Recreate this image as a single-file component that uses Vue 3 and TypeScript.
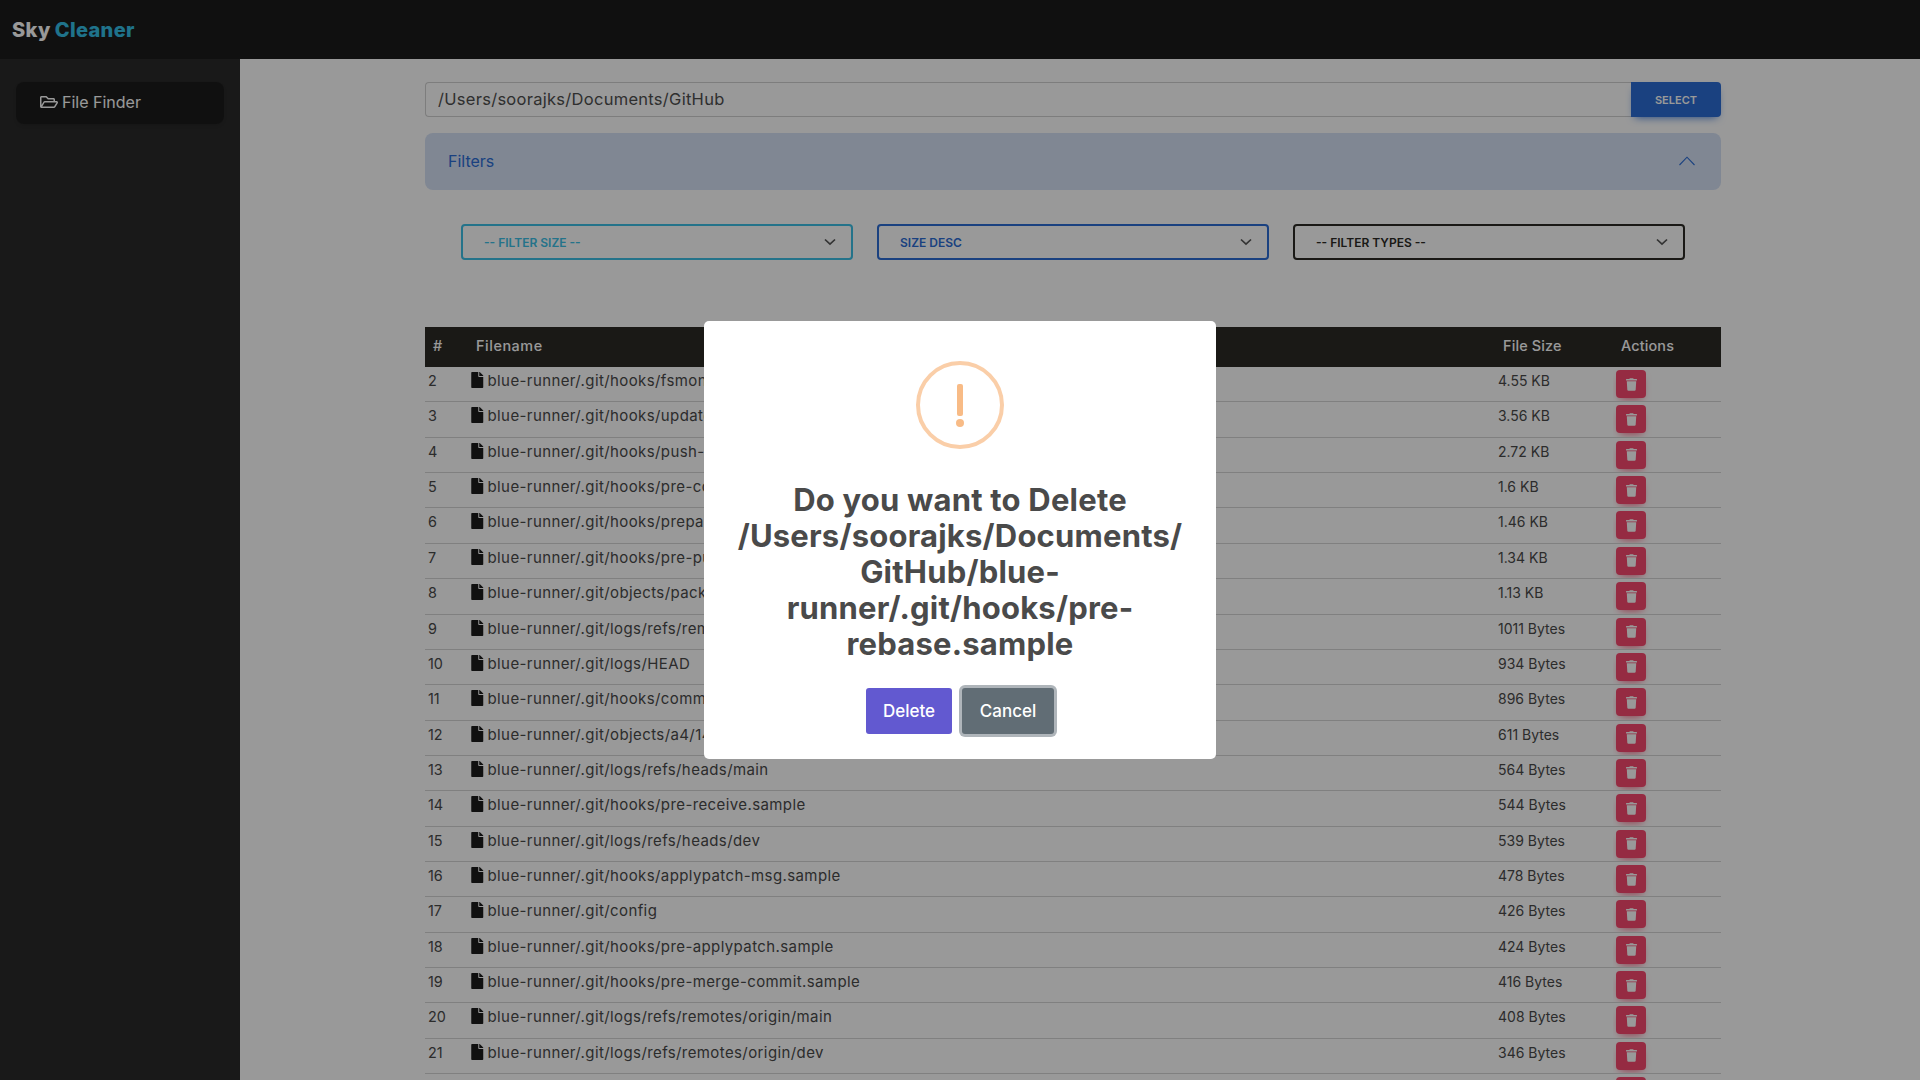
<script setup lang="ts">
interface Row { n: number; name: string; size: string }
const rows: Row[] = [
  { n: 2, name: 'blue-runner/.git/hooks/fsmonitor-watchman.sample', size: '4.55 KB' },
  { n: 3, name: 'blue-runner/.git/hooks/update.sample', size: '3.56 KB' },
  { n: 4, name: 'blue-runner/.git/hooks/push-to-checkout.sample', size: '2.72 KB' },
  { n: 5, name: 'blue-runner/.git/hooks/pre-commit.sample', size: '1.6 KB' },
  { n: 6, name: 'blue-runner/.git/hooks/prepare-commit-msg.sample', size: '1.46 KB' },
  { n: 7, name: 'blue-runner/.git/hooks/pre-push.sample', size: '1.34 KB' },
  { n: 8, name: 'blue-runner/.git/objects/pack/pack-a41c.idx', size: '1.13 KB' },
  { n: 9, name: 'blue-runner/.git/logs/refs/remotes/origin/HEAD', size: '1011 Bytes' },
  { n: 10, name: 'blue-runner/.git/logs/HEAD', size: '934 Bytes' },
  { n: 11, name: 'blue-runner/.git/hooks/commit-msg.sample', size: '896 Bytes' },
  { n: 12, name: 'blue-runner/.git/objects/a4/14c7e1', size: '611 Bytes' },
  { n: 13, name: 'blue-runner/.git/logs/refs/heads/main', size: '564 Bytes' },
  { n: 14, name: 'blue-runner/.git/hooks/pre-receive.sample', size: '544 Bytes' },
  { n: 15, name: 'blue-runner/.git/logs/refs/heads/dev', size: '539 Bytes' },
  { n: 16, name: 'blue-runner/.git/hooks/applypatch-msg.sample', size: '478 Bytes' },
  { n: 17, name: 'blue-runner/.git/config', size: '426 Bytes' },
  { n: 18, name: 'blue-runner/.git/hooks/pre-applypatch.sample', size: '424 Bytes' },
  { n: 19, name: 'blue-runner/.git/hooks/pre-merge-commit.sample', size: '416 Bytes' },
  { n: 20, name: 'blue-runner/.git/logs/refs/remotes/origin/main', size: '408 Bytes' },
  { n: 21, name: 'blue-runner/.git/logs/refs/remotes/origin/dev', size: '346 Bytes' },
]
const filters = [
  { label: '-- FILTER SIZE --', tone: 'teal' },
  { label: 'SIZE DESC', tone: 'blue' },
  { label: '-- FILTER TYPES --', tone: 'dark' },
]
</script>

<template>
  <div class="app">
    <header class="topbar">
      <span class="logo"><span class="sky">Sky</span><span class="cleaner">Cleaner</span></span>
    </header>
    <div class="body">
      <aside class="side">
        <a class="nav-item">
          <svg class="folder" viewBox="0 0 576 512"><path fill="currentColor" d="M527.9 224H480v-48c0-26.5-21.5-48-48-48H272l-64-64H48C21.5 64 0 85.5 0 112v288c0 26.5 21.5 48 48 48h400c16.5 0 31.9-8.5 40.7-22.6l79.9-128c20-31.9-3-73.4-40.7-73.4zM48 118c0-3.3 2.7-6 6-6h134.1l64 64H426c3.3 0 6 2.7 6 6v42H152c-16.8 0-32.4 8.8-41.1 23.2L48 351.4zm400 282H72l77.2-128H528z"/></svg>
          File Finder
        </a>
      </aside>
      <main class="main">
        <div class="content">
          <div class="path-row">
            <input class="path" value="/Users/soorajks/Documents/GitHub" readonly />
            <button class="select-btn">SELECT</button>
          </div>
          <div class="accordion">
            <span>Filters</span>
            <svg class="acc-chev" viewBox="0 0 16 10"><path d="M0.5 9 L8 1.2 L15.5 9" fill="none" stroke="currentColor" stroke-width="1.1"/></svg>
          </div>
          <div class="filters">
            <div v-for="f in filters" :key="f.label" class="sel" :class="f.tone">
              <span>{{ f.label }}</span>
              <svg class="sel-chev" viewBox="0 0 12 8"><path d="M1 1.5 L6 6.2 L11 1.5" fill="none" stroke="#555" stroke-width="1.7"/></svg>
            </div>
          </div>
          <table class="tbl">
            <colgroup>
              <col class="c1" /><col class="c2" /><col class="c3" /><col class="c4" />
            </colgroup>
            <thead>
              <tr><th>#</th><th class="th-name">Filename</th><th>File Size</th><th>Actions</th></tr>
            </thead>
            <tbody>
              <tr v-for="r in rows" :key="r.n">
                <td>{{ r.n }}</td>
                <td>
                  <svg class="file" viewBox="0 0 384 512"><path fill="currentColor" d="M224 136V0H24C10.7 0 0 10.7 0 24v464c0 13.3 10.7 24 24 24h336c13.3 0 24-10.7 24-24V160H248c-13.2 0-24-10.8-24-24zm160-14.1v6.1H256V0h6.1c6.4 0 12.5 2.5 17 7l97.9 98c4.5 4.5 7 10.6 7 16.9z"/></svg>
                  <span class="fname">{{ r.name }}</span>
                </td>
                <td class="size">{{ r.size }}</td>
                <td>
                  <button class="trash">
                    <svg viewBox="0 0 448 512"><path fill="currentColor" d="M432 32H312l-9.4-18.7A24 24 0 0 0 281.1 0H166.8a23.72 23.72 0 0 0-21.4 13.3L136 32H16A16 16 0 0 0 0 48v32a16 16 0 0 0 16 16h416a16 16 0 0 0 16-16V48a16 16 0 0 0-16-16zM53.2 467a48 48 0 0 0 47.9 45h245.8a48 48 0 0 0 47.9-45L416 128H32z"/></svg>
                  </button>
                </td>
              </tr>
              <tr>
                <td></td><td></td><td></td>
                <td>
                  <button class="trash">
                    <svg viewBox="0 0 448 512"><path fill="currentColor" d="M432 32H312l-9.4-18.7A24 24 0 0 0 281.1 0H166.8a23.72 23.72 0 0 0-21.4 13.3L136 32H16A16 16 0 0 0 0 48v32a16 16 0 0 0 16 16h416a16 16 0 0 0 16-16V48a16 16 0 0 0-16-16zM53.2 467a48 48 0 0 0 47.9 45h245.8a48 48 0 0 0 47.9-45L416 128H32z"/></svg>
                  </button>
                </td>
              </tr>
            </tbody>
          </table>
        </div>
      </main>
    </div>

    <div class="overlay">
      <div class="modal">
        <div class="warn"><span class="bar"></span><span class="dot"></span></div>
        <h2 class="title">Do you want to Delete<br />/Users/soorajks/Documents/<br />GitHub/blue-<br />runner/.git/hooks/pre-<br />rebase.sample</h2>
        <div class="actions">
          <button class="btn del">Delete</button>
          <button class="btn cancel">Cancel</button>
        </div>
      </div>
    </div>
  </div>
</template>

<style>
html, body { margin: 0; background: #fff; overflow: hidden; }
</style>

<style scoped>
.app {
  height: 1080px;
  overflow: hidden;
  display: flex;
  flex-direction: column;
  font-family: Inter, "Noto Sans", sans-serif;
  color: #4a4a4a;
}
.topbar {
  height: 59px;
  flex: none;
  background: #1c1c1c;
  display: flex;
  align-items: center;
  padding-left: 12px;
}
.logo { font-size: 20px; font-weight: 800; letter-spacing: 0.35px; display: flex; gap: 4px; }
.sky { color: #fff; }
.cleaner { color: #34c0e8; }
.body { flex: 1; display: flex; min-height: 0; }
.side {
  width: 240px;
  flex: none;
  background: #2b2b2b;
  padding: 23px 16px 0;
  box-sizing: border-box;
}
.nav-item {
  height: 42px;
  background: #1c1c1c;
  border-radius: 8px;
  display: flex;
  align-items: center;
  padding-left: 24px;
  gap: 4px;
  color: #fff;
  font-size: 16px;
  padding-bottom: 2px;
  box-sizing: border-box;
  box-shadow: 0 2px 6px rgba(0,0,0,.15);
}
.folder { width: 18px; height: 16px; }
.main { flex: 1; padding: 23px 0 0 185px; box-sizing: border-box; min-width: 0; }
.content { width: 1296px; }
.path-row { display: flex; height: 35px; }
.path {
  flex: 1;
  min-width: 0;
  box-sizing: border-box;
  border: 1px solid #d0d0d0;
  border-right: none;
  border-radius: 4px 0 0 4px;
  background: transparent;
  padding: 0 12px 2px;
  font: 16.5px Inter, "Noto Sans", sans-serif;
  letter-spacing: 0.28px;
  color: #4f4f4f;
  outline: none;
}
.select-btn {
  width: 90px;
  flex: none;
  border: none;
  border-radius: 0 4px 4px 0;
  background: #2c6dd5;
  color: #fff;
  font: 600 11px Inter, sans-serif;
  box-shadow: 0 4px 9px -4px #2c6dd5;
}
.accordion {
  margin-top: 16px;
  height: 57px;
  background: #d5e1f5;
  border-radius: 8px;
  display: flex;
  align-items: center;
  justify-content: space-between;
  padding: 0 26px 2px 23px;
  box-sizing: border-box;
  color: #2c6dd5;
  font-size: 16px;
}
.acc-chev { width: 16px; height: 10px; color: #2c6dd5; }
.filters {
  display: flex;
  gap: 24px;
  padding: 34px 36px 0;
}
.sel {
  flex: 1;
  height: 36px;
  box-sizing: border-box;
  border: 2px solid;
  border-radius: 4px;
  display: flex;
  align-items: center;
  justify-content: space-between;
  padding: 0 15px 0 21px;
  font-size: 12px;
  font-weight: 600;
}
.sel svg { width: 12px; height: 8px; }
.teal { border-color: #3cc0e6; color: #3cc0e6; }
.blue { border-color: #2c6dd5; color: #2c6dd5; }
.dark { border-color: #2c2a26; color: #2c2a26; }
.tbl {
  margin-top: 67px;
  width: 1296px;
  border-collapse: separate;
  border-spacing: 0;
  table-layout: fixed;
  font-size: 14.4px;
}
.c1 { width: 43px; }
.c3 { width: 118px; }
.c4 { width: 108px; }
th {
  background: #2c2a26;
  color: #fff;
  height: 40px;
  box-sizing: border-box;
  padding: 0 8px 4px;
  font-weight: 500;
  text-align: left;
  font-size: 14.4px;
  letter-spacing: 0.15px;
}
.th-name { letter-spacing: 0.55px; }
td {
  height: 35.36px;
  box-sizing: border-box;
  padding: 3px 3px 0;
  line-height: 22px;
  vertical-align: top;
  border-bottom: 1px solid #d5d5d5;
  white-space: nowrap;
  overflow: hidden;
}
.size { font-size: 14px; }
.fname { font-size: 15px; letter-spacing: 0.4px; }
.file { width: 12.5px; height: 16px; color: #1c1c1c; margin-right: 4px; vertical-align: -2px; }
.trash {
  width: 30px;
  height: 28px;
  border: none;
  border-radius: 4px;
  background: #f8496e;
  color: #fff;
  padding: 0;
  display: flex;
  align-items: center;
  justify-content: center;
  box-shadow: 0 4px 9px -4px #f8496e;
}
.trash svg { width: 11px; height: 13px; }
.overlay {
  position: fixed;
  inset: 0;
  background: rgba(0,0,0,.4);
  display: flex;
  align-items: center;
  justify-content: center;
}
.modal {
  width: 512px;
  height: 438px;
  box-sizing: border-box;
  background: #fff;
  border-radius: 5px;
  display: flex;
  flex-direction: column;
  align-items: center;
  padding-top: 40px;
}
.warn {
  width: 88px;
  height: 88px;
  box-sizing: border-box;
  border: 4px solid #facea8;
  border-radius: 50%;
  display: flex;
  flex-direction: column;
  align-items: center;
  padding-top: 19px;
  flex: none;
}
.bar { width: 6px; height: 32px; background: #f8bb86; border-radius: 2px; }
.dot { width: 8px; height: 8px; background: #f8bb86; border-radius: 50%; margin-top: 3px; }
.title {
  margin: 33px 0 0;
  font-size: 31px;
  line-height: 36px;
  font-weight: 700;
  letter-spacing: 0.2px;
  color: #4a4a4a;
  text-align: center;
  white-space: nowrap;
}
.actions { display: flex; gap: 10px; margin-top: 26px; }
.btn {
  height: 46px;
  border: none;
  border-radius: 3px;
  color: #fff;
  font: 500 17px Inter, sans-serif;
  padding: 0;
}
.del { width: 86px; background: #6259d0; }
.cancel { width: 92px; background: #616d75; box-shadow: 0 0 0 3px rgba(110,120,129,.55); }
</style>
